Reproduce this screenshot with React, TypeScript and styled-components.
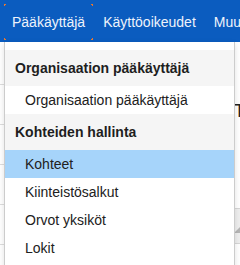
import * as React from "react";
import styled, { createGlobalStyle } from "styled-components";

const GlobalStyle = createGlobalStyle`
    html, body {
        margin: 0;
        padding: 0;
        background: #ffffff;
    }
    body {
        font-family: "Liberation Sans", Arial, sans-serif;
        font-size: 14px;
        color: #1e1e1e;
    }
`;

interface MenuGroup {
    title: string;
    items: string[];
}

const groups: MenuGroup[] = [
    { title: "Organisaation pääkäyttäjä", items: ["Organisaation pääkäyttäjä"] },
    { title: "Kohteiden hallinta", items: ["Kohteet", "Kiinteistösalkut", "Orvot yksiköt", "Lokit"] },
];

const navItems = ["Pääkäyttäjä", "Käyttöoikeudet", "Muut toiminnot"];

export default function App(): React.ReactElement {
    const active = "Kohteet";
    return (
        <Screen>
            <GlobalStyle />
            <Nav>
                {navItems.map((label, i) => (
                    <NavItem key={label} focused={i === 0}>
                        {label}
                    </NavItem>
                ))}
            </Nav>
            <Page>
                <SideList>
                    <SideRow />
                    <SideRow />
                    <SideRow />
                    <SideRow />
                    <SideRow />
                </SideList>
                <Main>
                    <Title>Tiedot</Title>
                    <TableHead>
                        <SortIcon viewBox="0 0 10 14">
                            <path d="M0 14 L10 4 L10 14 Z" fill="#b5b5b5" />
                        </SortIcon>
                    </TableHead>
                </Main>
            </Page>
            <Dropdown>
                {groups.map((g) => (
                    <React.Fragment key={g.title}>
                        <GroupHeader>{g.title}</GroupHeader>
                        {g.items.map((item) => (
                            <MenuItem key={item} selected={item === active}>
                                {item}
                            </MenuItem>
                        ))}
                    </React.Fragment>
                ))}
            </Dropdown>
        </Screen>
    );
}

const Screen = styled.div`
    position: relative;
    width: 240px;
    height: 265px;
    overflow: hidden;
`;

const Nav = styled.nav`
    display: flex;
    align-items: flex-start;
    gap: 2px;
    height: 42px;
    padding: 4px 0 0 4px;
    box-sizing: border-box;
    background: #0b5cbf;
    white-space: nowrap;
    overflow: hidden;
`;

const corner = "linear-gradient(#e8772e, #e8772e)";

const NavItem = styled.div<{ focused?: boolean }>`
    height: 36px;
    line-height: 36px;
    padding: 0 8px;
    font-size: 14px;
    color: #eef3fb;
    flex-shrink: 0;
    background: ${(p) =>
        p.focused
            ? `${corner} left top / 2px 1px no-repeat,
               ${corner} left top / 1px 2px no-repeat,
               ${corner} right top / 2px 1px no-repeat,
               ${corner} right top / 1px 2px no-repeat,
               ${corner} left bottom / 2px 1px no-repeat,
               ${corner} left bottom / 1px 2px no-repeat,
               ${corner} right bottom / 2px 1px no-repeat,
               ${corner} right bottom / 1px 2px no-repeat`
            : "none"};
`;

const Page = styled.div`
    display: grid;
    grid-template-columns: 234px 1fr;
`;

const SideList = styled.div`
    display: flex;
    flex-direction: column;
    padding-top: 3px;
`;

const SideRow = styled.div`
    height: 40px;
    border-bottom: 1px solid #dddddd;
    box-sizing: border-box;
`;

const Main = styled.div`
    display: flex;
    flex-direction: column;
    padding-top: 58px;
    white-space: nowrap;
`;

const Title = styled.h2`
    margin: 0;
    font-size: 18px;
    line-height: 22px;
    font-weight: normal;
    color: #222222;
`;

const TableHead = styled.div`
    margin-top: 86px;
    height: 34px;
    background: #eeeeee;
    border-top: 1px solid #d6d6d6;
    border-bottom: 1px solid #d6d6d6;
    display: flex;
    align-items: center;
`;

const SortIcon = styled.svg`
    width: 10px;
    height: 14px;
`;

const Dropdown = styled.div`
    position: absolute;
    top: 42px;
    left: 4px;
    width: 231px;
    box-sizing: border-box;
    padding: 8px 0;
    background: #ffffff;
    border: 1px solid #cccccc;
    border-top: none;
    box-shadow: 0 2px 6px rgba(0, 0, 0, 0.12);
`;

const GroupHeader = styled.div`
    padding: 8px 10px;
    line-height: 20px;
    font-size: 14px;
    font-weight: bold;
    color: #1e1e1e;
    background: #f5f5f5;
    white-space: nowrap;
`;

const MenuItem = styled.div<{ selected?: boolean }>`
    padding: 4px 20px;
    line-height: 20px;
    font-size: 14px;
    color: #212121;
    background: ${(p) => (p.selected ? "#a6d4fa" : "#ffffff")};
    white-space: nowrap;
`;
